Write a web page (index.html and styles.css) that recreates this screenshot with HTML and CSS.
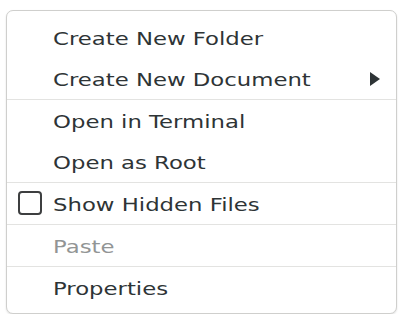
FILE: index.html
```html
<!DOCTYPE html>
<html>
<head>
<meta charset="utf-8">
<link rel="stylesheet" href="styles.css">
</head>
<body>
<div class="menu">
  <div class="section">
    <div class="item"><span class="label">Create New Folder</span></div>
    <div class="item"><span class="label">Create New Document</span><span class="arrow"></span></div>
  </div>
  <div class="section">
    <div class="item"><span class="label">Open in Terminal</span></div>
    <div class="item"><span class="label">Open as Root</span></div>
  </div>
  <div class="section">
    <div class="item check-item"><span class="check"></span><span class="label">Show Hidden Files</span></div>
  </div>
  <div class="section">
    <div class="item disabled"><span class="label">Paste</span></div>
  </div>
  <div class="section">
    <div class="item"><span class="label">Properties</span></div>
  </div>
</div>
</body>
</html>
```
FILE: styles.css
```css
html, body {
  margin: 0;
  padding: 0;
  background: #ffffff;
}
body {
  padding: 10px 0 0 6px;
  font-family: "DejaVu Sans", sans-serif;
  font-size: 18px;
  color: #2e3436;
}
.menu {
  width: 391px;
  box-sizing: border-box;
  border: 1px solid #cfcfcd;
  border-radius: 7px;
  padding: 6px 0 5px;
  background: #fff;
  box-shadow: 0 1px 2px rgba(0,0,0,0.12);
}
.section + .section {
  border-top: 1px solid #e3e3e1;
}
.item {
  height: 41px;
  display: flex;
  align-items: center;
  padding-left: 46px;
  padding-right: 16px;
  position: relative;
}
.label {
  flex: 0 0 auto;
  display: block;
  transform: scaleX(1.265);
  transform-origin: left center;
  padding-top: 1px;
}
.disabled {
  color: #929595;
}
.arrow {
  margin-left: auto;
  width: 0;
  height: 0;
  border-top: 7px solid transparent;
  border-bottom: 7px solid transparent;
  border-left: 10px solid #2e3436;
}
.check {
  position: absolute;
  left: 11px;
  top: 8px;
  width: 20px;
  height: 20px;
  border: 2px solid #3d3f40;
  border-radius: 4px;
}
```
